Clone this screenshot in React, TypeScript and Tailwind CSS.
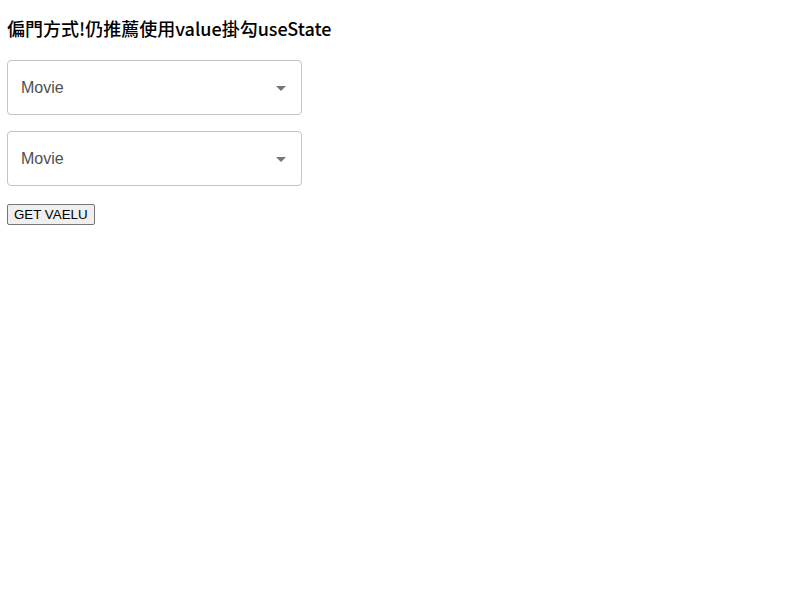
export default function App() {
  const options = ["Movie", "Movie"];

  return (
    <div className="min-h-screen bg-white p-[7px] font-['Liberation_Sans','Noto_Sans_CJK_TC',sans-serif]">
      <h3 className="mt-[9px] text-[18px] font-medium leading-[24px] text-black font-['Noto_Sans_CJK_TC',sans-serif]">
        偏門方式!仍推薦使用value掛勾useState
      </h3>

      <div className="mt-[20px] flex flex-col gap-4">
        {options.map((label, i) => (
          <div
            key={i}
            className="flex h-[55px] w-[295px] items-center justify-between rounded-[4px] border border-[#c4c4c4] pl-[13px] pr-[8px]"
          >
            <span className="text-[16px] text-[#505050] font-['Liberation_Sans',sans-serif]">
              {label}
            </span>
            <svg viewBox="0 0 24 24" className="h-6 w-6 fill-[#757575]">
              <path d="M7 10l5 5 5-5z" />
            </svg>
          </div>
        ))}
      </div>

      <button className="mt-[18px] h-[21px] rounded-[2px] border border-[#767676] bg-[#efefef] px-[6px] text-[13.33px] leading-none text-black font-['Liberation_Sans',sans-serif]">
        GET VAELU
      </button>
    </div>
  );
}
